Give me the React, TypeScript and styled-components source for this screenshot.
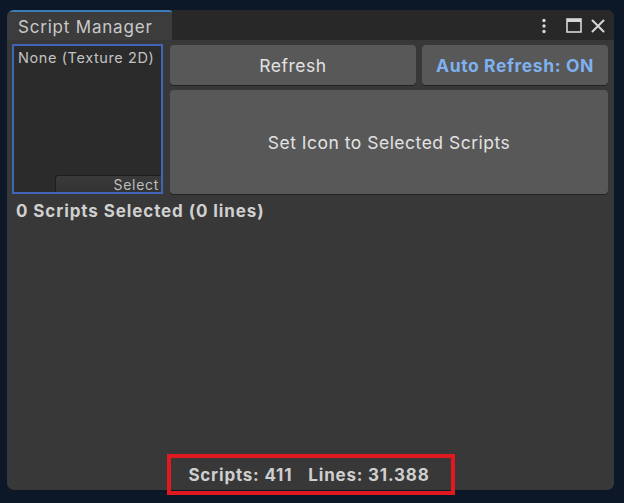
import React from "react";
import styled, { createGlobalStyle } from "styled-components";

const Global = createGlobalStyle`
  html, body { margin: 0; padding: 0; background: #0c1727; }
  body { font-family: Inter, "Noto Sans", sans-serif; }
  #root { width: 624px; height: 503px; position: relative; overflow: hidden; }
`;

const Window = styled.div`
  position: relative;
  margin: 10px 0 0 7px;
  width: 607px;
  height: 480px;
  border-radius: 7px;
  overflow: hidden;
  background: #383838;
  display: flex;
  flex-direction: column;
`;

const TabBar = styled.div`
  height: 30px;
  background: #282828;
  display: flex;
  align-items: stretch;
  flex-shrink: 0;
`;

const Tab = styled.div`
  width: 165px;
  background: #3c3c3c;
  border-top: 2px solid #3d7ab8;
  box-sizing: border-box;
  color: #c9c9c9;
  font-size: 17px;
  letter-spacing: 0.8px;
  padding: 5px 0 0 11px;
  border-top-right-radius: 3px;
`;

const TabTools = styled.div`
  margin-left: auto;
  display: flex;
  align-items: center;
  gap: 9px;
  padding-right: 9px;
  padding-top: 1px;
  color: #d0d0d0;
`;

const Kebab = styled.svg`
  margin-right: 10px;
`;

const Body = styled.div`
  flex: 1;
  display: flex;
  flex-direction: column;
  padding: 4px 6px 0 5px;
`;

const TopRow = styled.div`
  display: flex;
  gap: 7px;
`;

const ObjectField = styled.div`
  width: 151px;
  height: 150px;
  box-sizing: border-box;
  border: 2px solid #4064b8;
  background: #2b2b2b;
  position: relative;
  color: #c2c2c2;
  font-size: 14.5px;
  letter-spacing: 0.6px;
  padding: 3px 0 0 4px;
`;

const SelectButton = styled.div`
  position: absolute;
  right: 0;
  bottom: 0;
  width: 106px;
  height: 17px;
  background: linear-gradient(#3a3a3a, #333);
  border-top: 1px solid #1e1e1e;
  border-left: 1px solid #1e1e1e;
  border-top-left-radius: 3px;
  color: #bdbdbd;
  font-size: 14px;
  letter-spacing: 0.7px;
  text-align: right;
  padding-right: 2px;
  line-height: 17px;
  box-sizing: border-box;
`;

const ButtonColumn = styled.div`
  flex: 1;
  display: flex;
  flex-direction: column;
  gap: 5px;
  padding-top: 1px;
`;

const ButtonRow = styled.div`
  display: flex;
  gap: 6px;
`;

const Button = styled.div<{ $w?: number; $h: number; $accent?: boolean }>`
  ${(p) => (p.$w ? `width: ${p.$w}px;` : "flex: 1;")}
  height: ${(p) => p.$h}px;
  background: #585858;
  border-radius: 4px;
  box-shadow: 0 1px 0 #232323;
  display: flex;
  align-items: center;
  justify-content: center;
  font-size: 17.5px;
  letter-spacing: ${(p) => (p.$accent ? "0.6px" : "0.5px")};
  color: ${(p) => (p.$accent ? "#7fb1ef" : "#e2e2e2")};
  font-weight: ${(p) => (p.$accent ? 700 : 400)};
`;

const Status = styled.div`
  margin: 7px 0 0 4px;
  font-size: 17px;
  letter-spacing: 0.9px;
  font-weight: 700;
  color: #d0d0d0;
`;

const Footer = styled.div`
  margin-top: auto;
  height: 30px;
  display: flex;
  align-items: center;
  justify-content: center;
  gap: 16px;
  font-size: 17px;
  letter-spacing: 0.8px;
  font-weight: 700;
  color: #cfcfcf;
  padding-right: 2px;
`;

const Highlight = styled.div`
  position: absolute;
  left: 167px;
  top: 454px;
  width: 288px;
  height: 41px;
  box-sizing: border-box;
  border: 4px solid #e0191f;
  pointer-events: none;
`;

export default function App() {
  return (
    <>
      <Global />
      <Window>
        <TabBar>
          <Tab>Script Manager</Tab>
          <TabTools>
            <Kebab width="6" height="16" viewBox="0 0 6 16">
              <circle cx="3" cy="2.5" r="1.7" fill="#d6d6d6" />
              <circle cx="3" cy="8" r="1.7" fill="#d6d6d6" />
              <circle cx="3" cy="13.5" r="1.7" fill="#d6d6d6" />
            </Kebab>
            <svg width="16" height="15" viewBox="0 0 16 15">
              <rect x="1" y="1" width="14" height="13" fill="none" stroke="#d6d6d6" strokeWidth="1.6" />
              <rect x="1" y="1" width="14" height="3" fill="#d6d6d6" />
            </svg>
            <svg width="14" height="14" viewBox="0 0 14 14">
              <path d="M1.5 1.5 L12.5 12.5 M12.5 1.5 L1.5 12.5" stroke="#d6d6d6" strokeWidth="2" strokeLinecap="round" />
            </svg>
          </TabTools>
        </TabBar>
        <Body>
          <TopRow>
            <ObjectField>
              None (Texture 2D)
              <SelectButton>Select</SelectButton>
            </ObjectField>
            <ButtonColumn>
              <ButtonRow>
                <Button $h={40}>Refresh</Button>
                <Button $w={186} $h={40} $accent>
                  Auto Refresh: ON
                </Button>
              </ButtonRow>
              <Button $h={103}>Set Icon to Selected Scripts</Button>
            </ButtonColumn>
          </TopRow>
          <Status>0 Scripts Selected (0 lines)</Status>
          <Footer>
            <span>Scripts: 411</span>
            <span>Lines: 31.388</span>
          </Footer>
        </Body>
      </Window>
      <Highlight />
    </>
  );
}
